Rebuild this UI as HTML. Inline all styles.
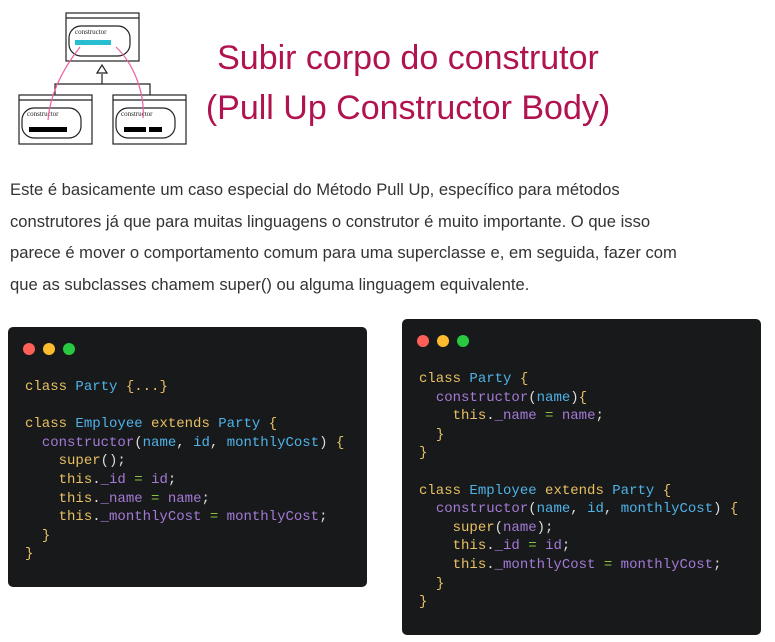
<!DOCTYPE html>
<html><head><meta charset="utf-8"><style>
body{margin:0;width:775px;height:642px;background:#fff;position:relative;overflow:hidden;font-family:"Liberation Sans",sans-serif}
.t{position:absolute;left:190px;width:436px;text-align:center;color:#b0134f;font-size:34px;line-height:40px}
.p{position:absolute;left:10px;top:174px;width:684px;color:#333;font-size:16.6px;line-height:31.5px}
.c{position:absolute;background:#18191b;border-radius:5px}
.d{position:absolute;top:16px;width:12px;height:12px;border-radius:50%}
pre{position:absolute;margin:0;font-family:"Liberation Mono","DejaVu Sans Mono",monospace;font-size:14px;line-height:18.6px;color:#ddd}
.k{color:#e8c063}.b{color:#4fb3e8}.v{color:#a47ad6}.g{color:#8cc43f}
</style></head><body>
<svg style="position:absolute;left:0;top:0" width="200" height="160" viewBox="0 0 200 160">
<g fill="none" stroke="#222" stroke-width="1.2">
<rect x="66" y="13" width="73" height="48"/><line x1="66" y1="18" x2="139" y2="18"/>
<rect x="69" y="26" width="61" height="30" rx="12"/>
<rect x="19" y="95" width="73" height="49"/><line x1="19" y1="100" x2="92" y2="100"/>
<rect x="22" y="108" width="59" height="30" rx="12"/>
<rect x="113" y="95" width="73" height="49"/><line x1="113" y1="100" x2="186" y2="100"/>
<rect x="116" y="108" width="59" height="30" rx="12"/>
<path d="M102 74V84M55 95V84H150V95"/><path d="M97 73L102 65L107 73Z"/>
</g>
<rect x="75" y="40" width="36" height="5" fill="#29bdd0"/>
<rect x="29" y="127" width="38" height="5" fill="#000"/>
<rect x="124" y="127" width="22" height="5" fill="#000"/><rect x="149" y="127" width="13" height="5" fill="#000"/>
<g font-family="Liberation Serif,serif" font-size="7" fill="#222"><text x="75" y="34">constructor</text><text x="27" y="116">constructor</text><text x="121" y="116">constructor</text></g>
<g fill="none" stroke="#e8609e" stroke-width="1.2"><path d="M48 120C50 95 62 70 80 47"/><path d="M143 118C145 95 135 65 116 47"/></g>
</svg>
<div class="t" style="top:38px">Subir corpo do construtor</div>
<div class="t" style="top:88px">(Pull Up Constructor Body)</div>
<div class="p">Este é basicamente um caso especial do Método Pull Up, específico para métodos construtores já que para muitas linguagens o construtor é muito importante. O que isso parece é mover o comportamento comum para uma superclasse e, em seguida, fazer com que as subclasses chamem super() ou alguma linguagem equivalente.</div>
<div class="c" style="left:8px;top:327px;width:359px;height:260px">
<div class="d" style="left:15px;background:#fe5f57"></div><div class="d" style="left:35px;background:#febb2e"></div><div class="d" style="left:55px;background:#28c840"></div>
<pre style="left:17px;top:51px"><span class="k">class</span> <span class="b">Party</span> <span class="k">{...}</span>

<span class="k">class</span> <span class="b">Employee</span> <span class="k">extends</span> <span class="b">Party</span> <span class="k">{</span>
  <span class="v">constructor</span>(<span class="b">name</span>, <span class="b">id</span>, <span class="b">monthlyCost</span>) <span class="k">{</span>
    <span class="k">super</span>();
    <span class="k">this</span>.<span class="v">_id</span> <span class="g">=</span> <span class="v">id</span>;
    <span class="k">this</span>.<span class="v">_name</span> <span class="g">=</span> <span class="v">name</span>;
    <span class="k">this</span>.<span class="v">_monthlyCost</span> <span class="g">=</span> <span class="v">monthlyCost</span>;
  <span class="k">}</span>
<span class="k">}</span></pre></div>
<div class="c" style="left:402px;top:319px;width:359px;height:316px">
<div class="d" style="left:15px;background:#fe5f57"></div><div class="d" style="left:35px;background:#febb2e"></div><div class="d" style="left:55px;background:#28c840"></div>
<pre style="left:17px;top:51px"><span class="k">class</span> <span class="b">Party</span> <span class="k">{</span>
  <span class="v">constructor</span>(<span class="b">name</span>)<span class="k">{</span>
    <span class="k">this</span>.<span class="v">_name</span> <span class="g">=</span> <span class="v">name</span>;
  <span class="k">}</span>
<span class="k">}</span>

<span class="k">class</span> <span class="b">Employee</span> <span class="k">extends</span> <span class="b">Party</span> <span class="k">{</span>
  <span class="v">constructor</span>(<span class="b">name</span>, <span class="b">id</span>, <span class="b">monthlyCost</span>) <span class="k">{</span>
    <span class="k">super</span>(<span class="v">name</span>);
    <span class="k">this</span>.<span class="v">_id</span> <span class="g">=</span> <span class="v">id</span>;
    <span class="k">this</span>.<span class="v">_monthlyCost</span> <span class="g">=</span> <span class="v">monthlyCost</span>;
  <span class="k">}</span>
<span class="k">}</span></pre></div>
</body></html>
